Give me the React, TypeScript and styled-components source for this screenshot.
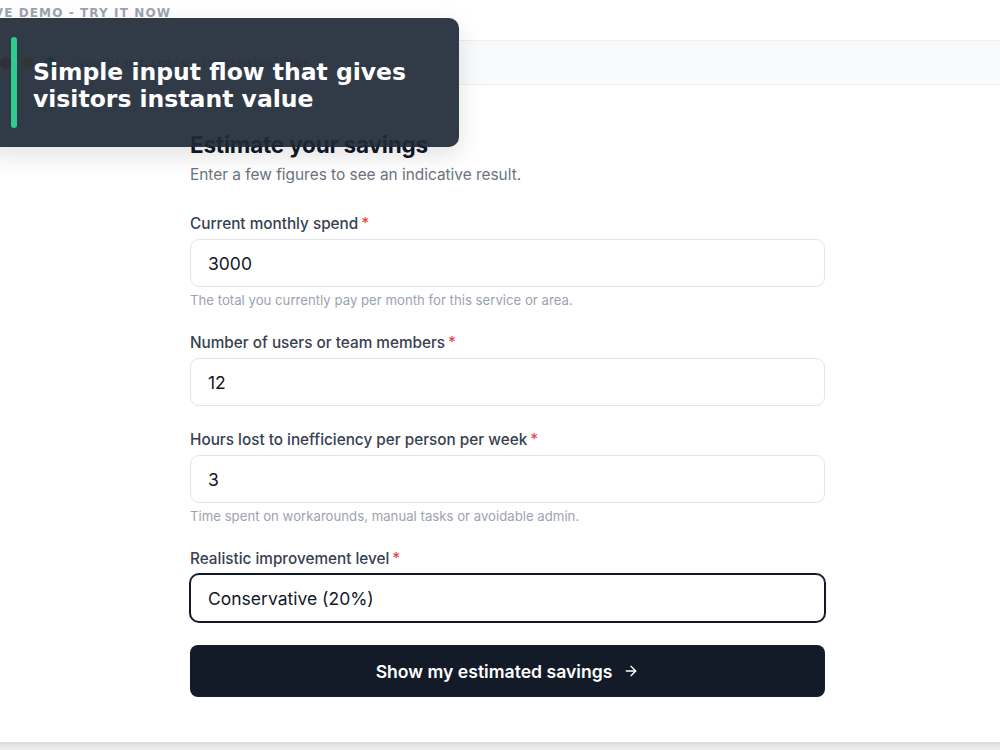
import React from "react";
import styled, { createGlobalStyle } from "styled-components";
import { ArrowRight } from "lucide-react";

const GlobalStyle = createGlobalStyle`
  html, body { margin: 0; padding: 0; background: #ffffff; }
  body { overflow: hidden; font-family: Inter, "Noto Sans", sans-serif; -webkit-font-smoothing: antialiased; }
  * { box-sizing: border-box; }
`;

const Page = styled.div`
  position: relative;
  width: 1000px;
  height: 750px;
  overflow: hidden;
  background: #ffffff;
  display: flex;
  flex-direction: column;
`;

const Eyebrow = styled.div`
  margin: 0 0 14px -87px;
  height: 26px;
  line-height: 26px;
  font-family: "DejaVu Sans", sans-serif;
  font-weight: 700;
  font-size: 12px;
  letter-spacing: 1.1px;
  text-transform: uppercase;
  color: #9ca3af;
  white-space: nowrap;
`;

const Frame = styled.div`
  margin: 0 -16px;
  border-top: 1px solid #eceef1;
  display: flex;
  flex-direction: column;
`;

const Bar = styled.div`
  height: 44px;
  background: #f9fafb;
  border-bottom: 1px solid #eceef1;
  display: flex;
  align-items: center;
  padding: 0 16px;
  gap: 10px;
`;

const Dot = styled.span<{ $c: string }>`
  width: 12px;
  height: 12px;
  border-radius: 50%;
  background: ${(p) => p.$c};
`;

const Url = styled.span`
  margin-left: 12px;
  font-family: "DejaVu Sans Mono", "Liberation Mono", monospace;
  font-size: 12px;
  color: #9ca3af;
`;

const Body = styled.div`
  padding: 47px 0 45px 206px;
`;

const Form = styled.form`
  width: 635px;
  display: flex;
  flex-direction: column;
`;

const Title = styled.h2`
  margin: 0;
  font-size: 22.5px;
  line-height: 26px;
  font-weight: 700;
  color: #111827;
  letter-spacing: -0.2px;
`;

const Subtitle = styled.p`
  margin: 6px 0 27px;
  font-size: 15.4px;
  line-height: 22px;
  color: #6b7280;
`;

const Fields = styled.div`
  display: flex;
  flex-direction: column;
  gap: 23px;
`;

const Field = styled.div`
  display: flex;
  flex-direction: column;
`;

const Label = styled.label`
  font-size: 15.3px;
  line-height: 20px;
  padding-top: 1px;
  font-weight: 500;
  color: #374151;
  margin-bottom: 5px;
`;

const Req = styled.span`
  color: #ef4444;
  margin-left: 3px;
`;

const controlCss = `
  height: 48px;
  width: 100%;
  border-radius: 9px;
  padding: 0 17px;
  font-family: Inter, "Noto Sans", sans-serif;
  font-size: 17.5px;
  color: #111827;
  background: #ffffff;
  outline: none;
`;

const Input = styled.input`
  ${controlCss}
  border: 1px solid #e2e4e8;
`;

const Select = styled.select`
  ${controlCss}
  appearance: none;
  -webkit-appearance: none;
  border: 1px solid #111827;
  box-shadow: 0 0 0 1px #111827;
`;

const Hint = styled.span`
  margin-top: 4px;
  font-size: 13.2px;
  line-height: 18px;
  color: #9ca3af;
`;

const Button = styled.button`
  margin-top: 23px;
  height: 52px;
  border: none;
  border-radius: 8px;
  background: #131a28;
  color: #ffffff;
  font-family: Inter, "Noto Sans", sans-serif;
  font-size: 17.6px;
  font-weight: 600;
  display: flex;
  align-items: center;
  justify-content: center;
  gap: 11px;
`;

const Footer = styled.div`
  flex: 1;
  background: linear-gradient(#d9d9d9, #e7e7e7 4px, #ececec);
`;

const Callout = styled.div`
  position: absolute;
  top: 18px;
  left: -12px;
  width: 471px;
  height: 129px;
  border-radius: 10px;
  background: rgba(31, 41, 55, 0.92);
  display: flex;
  align-items: stretch;
  padding: 19px 20px 19px 23px;
  gap: 16px;
  box-shadow: 0 8px 24px rgba(0, 0, 0, 0.12);
`;

const Accent = styled.span`
  width: 6px;
  border-radius: 3px;
  background: #2ecc8f;
  flex-shrink: 0;
`;

const CalloutText = styled.div`
  align-self: center;
  font-family: "DejaVu Sans", sans-serif;
  font-weight: 700;
  font-size: 23.5px;
  line-height: 27px;
  color: #ffffff;
  padding-top: 6px;
`;

type FieldDef = { label: string; value: string; hint?: string };

const fields: FieldDef[] = [
  { label: "Current monthly spend", value: "3000", hint: "The total you currently pay per month for this service or area." },
  { label: "Number of users or team members", value: "12" },
  { label: "Hours lost to inefficiency per person per week", value: "3", hint: "Time spent on workarounds, manual tasks or avoidable admin." },
];

export default function App() {
  return (
    <>
      <GlobalStyle />
      <Page>
        <Eyebrow>Interactive demo - try it now</Eyebrow>
        <Frame>
          <Bar>
            <Dot $c="#f87171" />
            <Dot $c="#fbbf24" />
            <Dot $c="#34d399" />
            <Url>yourbrand.com/savings-calculator</Url>
          </Bar>
          <Body>
            <Form onSubmit={(e) => e.preventDefault()}>
              <Title>Estimate your savings</Title>
              <Subtitle>Enter a few figures to see an indicative result.</Subtitle>
              <Fields>
                {fields.map((f) => (
                  <Field key={f.label}>
                    <Label>
                      {f.label}
                      <Req>*</Req>
                    </Label>
                    <Input value={f.value} readOnly />
                    {f.hint && <Hint>{f.hint}</Hint>}
                  </Field>
                ))}
                <Field>
                  <Label>
                    Realistic improvement level
                    <Req>*</Req>
                  </Label>
                  <Select defaultValue="20">
                    <option value="20">Conservative (20%)</option>
                    <option value="35">Moderate (35%)</option>
                    <option value="50">Ambitious (50%)</option>
                  </Select>
                </Field>
              </Fields>
              <Button type="submit">
                Show my estimated savings
                <ArrowRight size={16} strokeWidth={2} />
              </Button>
            </Form>
          </Body>
        </Frame>
        <Footer />
        <Callout>
          <Accent />
          <CalloutText>
            Simple input flow that gives
            <br />
            visitors instant value
          </CalloutText>
        </Callout>
      </Page>
    </>
  );
}
